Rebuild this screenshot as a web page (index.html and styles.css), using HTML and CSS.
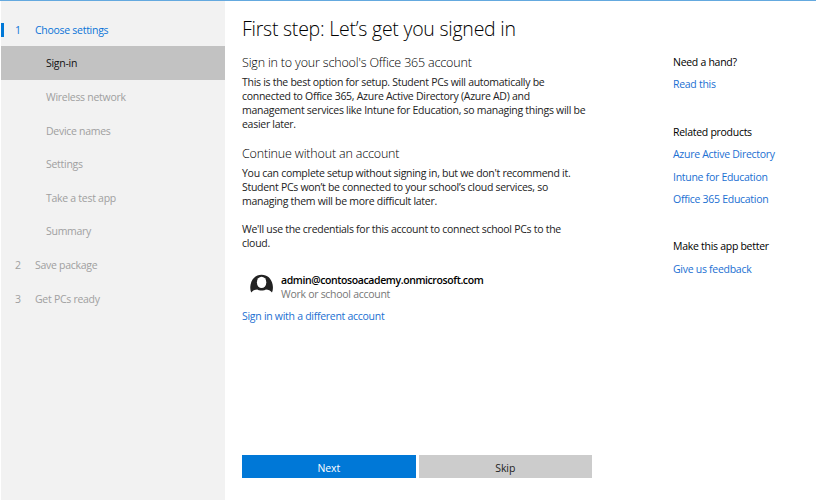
FILE: index.html
```html
<!DOCTYPE html>
<html lang="en">
<head>
<meta charset="utf-8">
<title>Set up School PCs</title>
<link rel="stylesheet" href="styles.css">
</head>
<body>
<div class="window">
  <nav class="sidebar">
    <a class="step current"><span class="num">1</span>Choose settings</a>
    <a class="step sub selected">Sign-in</a>
    <a class="step sub">Wireless network</a>
    <a class="step sub">Device names</a>
    <a class="step sub">Settings</a>
    <a class="step sub">Take a test app</a>
    <a class="step sub">Summary</a>
    <a class="step"><span class="num">2</span>Save package</a>
    <a class="step"><span class="num">3</span>Get PCs ready</a>
  </nav>
  <main class="content">
    <h1>First step: Let’s get you signed in</h1>
    <h2 class="signin">Sign in to your school's Office 365 account</h2>
    <p class="intro">This is the best option for setup. Student PCs will automatically be<br>connected to Office 365, Azure Active Directory (Azure AD) and<br>management services like Intune for Education, so managing things will be<br>easier later.</p>
    <h2 class="without">Continue without an account</h2>
    <p>You can complete setup without signing in, but we don't recommend it.<br>Student PCs won’t be connected to your school’s cloud services, so<br>managing them will be more difficult later.</p>
    <p class="credentials">We'll use the credentials for this account to connect school PCs to the<br>cloud.</p>
    <div class="account">
      <svg class="avatar" viewBox="0 0 24 20" width="24" height="20">
        <path fill="#222" d="M1.2 18.600C.2 15.700 0 13.600 .6 10.500C1.800 4.500 6 .8 11.600 .8S21.400 4.500 22.600 10.500C23.200 13.600 23 15.700 22 18.600C20.500 16.500 18.300 15.400 15.800 15.400C14.500 16.800 8.700 16.800 7.400 15.400C4.900 15.400 2.700 16.500 1.200 18.600Z"/>
        <ellipse fill="#fff" cx="11.600" cy="8.400" rx="4.700" ry="5.700"/>
      </svg>
      <div class="who"><b>admin@contosoacademy.onmicrosoft.com</b><span>Work or school account</span></div>
    </div>
    <a class="link different">Sign in with a different account</a>
    <div class="buttons"><button class="next">Next</button><button class="skip">Skip</button></div>
  </main>
  <aside class="help">
    <section><h3>Need a hand?</h3><a class="link">Read this</a></section>
    <section><h3>Related products</h3><a class="link">Azure Active Directory</a><a class="link">Intune for Education</a><a class="link">Office 365 Education</a></section>
    <section><h3>Make this app better</h3><a class="link">Give us feedback</a></section>
  </aside>
</div>
</body>
</html>
```
FILE: styles.css
```css
* { box-sizing: border-box; }
body { margin: 0; background: #fff; color: #222; font: 10.5px/14px "Open Sans", "Noto Sans", sans-serif; letter-spacing: -0.28px; }
h1, h2, h3, p { margin: 0; font-weight: 400; white-space: nowrap; }
.window { display: flex; width: 816px; height: 500px; border-top: 1px solid #64a9df; overflow: hidden; }
.sidebar { width: 224px; margin-left: 1px; padding-top: 11.5px; background: #f2f2f2; flex: none; }
.step { display: flex; align-items: center; height: 33.620px; padding: 1px 0 0 14px; color: #a0a0a0; }
.num { width: 20px; }
.step.sub { padding-left: 45px; }
.step.current { color: #0a74d8; position: relative; }
.current::before { content: ""; position: absolute; left: 0; top: 10px; width: 3px; height: 14px; background: #0078d7; }
.step.selected { background: #c2c2c2; color: #111; }
.content { width: 350px; margin-left: 17px; display: flex; flex-direction: column; flex: none; }
h1 { font-size: 19.5px; line-height: 26px; font-weight: 300; color: #000; margin-top: 15px; letter-spacing: -0.24px; }
h2 { font-size: 12.500px; line-height: 18px; font-weight: 300; color: #000; letter-spacing: -0.17px; }
.signin { margin-top: 12px; }
.intro { margin-top: 3px; }
.without { margin: 14px 0 3px; }
.credentials { margin-top: 14px; }
.account { display: flex; margin: 23px 0 0 8px; }
.avatar { margin-top: 1px; }
.who { display: flex; flex-direction: column; margin-left: 7px; color: #777; }
.who b { color: #000; font-weight: 600; letter-spacing: -0.4px; }
.link { color: #1b6fd2; }
.different { margin-top: 8px; }
.buttons { display: flex; gap: 3px; margin-top: auto; margin-bottom: 22px; }
button { flex: 1; height: 23px; border: 0; padding: 3px 0 0; font: inherit; letter-spacing: -0.1px; }
.next { background: #0078d7; color: #fff; }
.skip { background: #ccc; color: #222; }
.help { margin: 54px 0 0 81px; display: flex; flex-direction: column; gap: 33.4px; white-space: nowrap; }
.help section { display: flex; flex-direction: column; gap: 8.4px; }
h3 { font-size: inherit; color: #000; }
```
